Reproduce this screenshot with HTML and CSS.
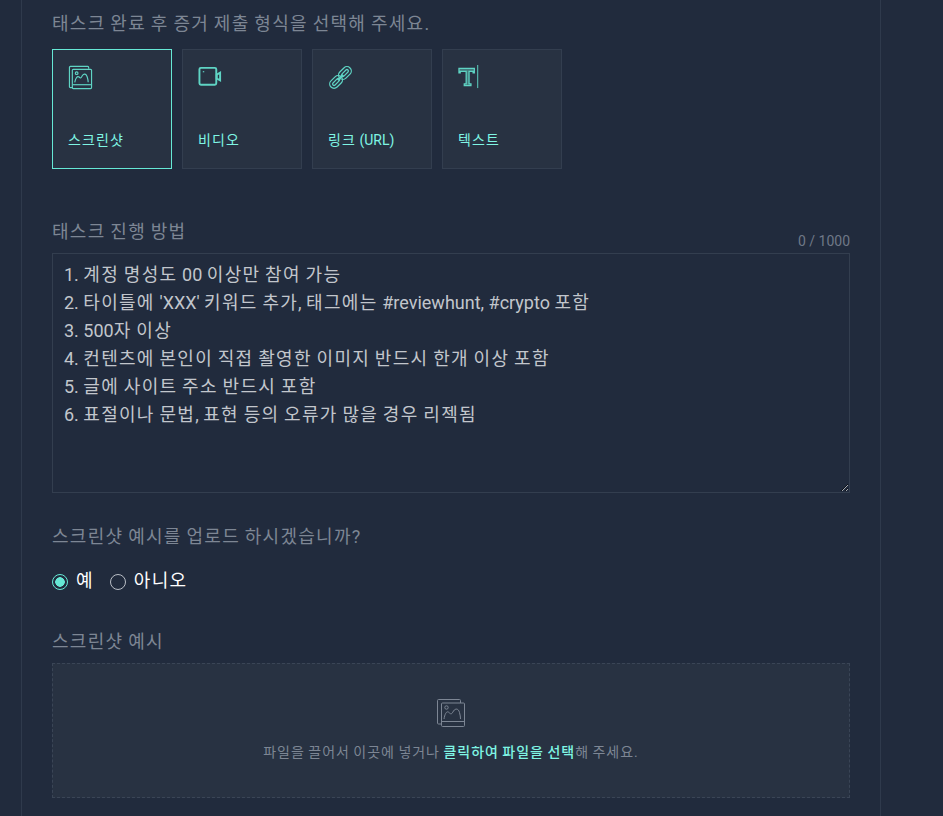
FILE: index.html
```html
<!DOCTYPE html>
<html lang="ko">
<head>
<meta charset="utf-8">
<title>태스크 증거 제출</title>
<link rel="stylesheet" href="styles.css">
</head>
<body>
<main class="panel">
  <p class="label first">태스크 완료 후 증거 제출 형식을 선택해 주세요.</p>
  <div class="types">
    <button class="type selected">
      <svg class="ticon" viewBox="0 0 26 26" fill="none" stroke="currentColor" stroke-width="1.2"><path d="M5 23.500H2.500a1 1 0 0 1-1-1V2.500a1 1 0 0 1 1-1h18a1 1 0 0 1 1 1V4"/><rect x="4.500" y="4.500" width="20" height="20" rx="1"/><path d="M5 20.500h19"/><circle cx="9" cy="8.500" r="1.400"/><path d="M7 18c1-5 3-7 4.500-5.500 1.500 1.500 2 1.500 3.500-1.500 1.500-2.500 4-2 5 1.500.6 2 1 4 1 5.500"/></svg>
      <span>스크린샷</span>
    </button>
    <button class="type">
      <svg class="ticon" viewBox="0 0 26 26" fill="none" stroke="currentColor" stroke-width="2"><rect x="1.500" y="3" width="17.500" height="17.500" rx="1.500"/><path d="M19.500 10l3.500-2v8l-3.500-2z"/><path d="M5 7h1.500" stroke-width="1.200"/></svg>
      <span>비디오</span>
    </button>
    <button class="type">
      <svg class="ticon" viewBox="0 0 26 26" fill="none" stroke="currentColor" stroke-width="1.300"><g transform="rotate(-45 13 13)"><rect x="-1" y="8.500" width="15" height="9" rx="4.500"/><rect x="12" y="8.500" width="15" height="9" rx="4.500"/><rect x="2" y="11.500" width="9" height="3" rx="1.500"/><rect x="15" y="11.500" width="9" height="3" rx="1.500"/><path d="M9 13h8" stroke-width="2.600"/></g></svg>
      <span>링크 <span class="latin">(URL)</span></span>
    </button>
    <button class="type">
      <svg class="ticon" viewBox="0 0 26 26" fill="none" stroke="currentColor"><path d="M1 3.500h16v4.700h-1.300V6.500h-4.200v13h2v2h-7v-2h2v-13H2.300v1.700H1z" stroke-width="1.300" fill="currentColor" fill-opacity=".45"/><path d="M20.500 0v24" stroke-width="1"/></svg>
      <span>텍스트</span>
    </button>
  </div>

  <div class="method-head">
    <label class="label">태스크 진행 방법</label>
    <span class="count latin">0 / 1000</span>
  </div>
  <div class="method" role="textbox" aria-multiline="true">
    <div><span class="latin">1. </span>계정 명성도 <span class="latin">00 </span>이상만 참여 가능</div>
    <div><span class="latin">2. </span>타이틀에 <span class="latin">'XXX' </span>키워드 추가<span class="latin">, </span>태그에는 <span class="latin">#reviewhunt, #crypto </span>포함</div>
    <div><span class="latin">3. 500</span>자 이상</div>
    <div><span class="latin">4. </span>컨텐츠에 본인이 직접 촬영한 이미지 반드시 한개 이상 포함</div>
    <div><span class="latin">5. </span>글에 사이트 주소 반드시 포함</div>
    <div><span class="latin">6. </span>표절이나 문법<span class="latin">, </span>표현 등의 오류가 많을 경우 리젝됨</div>
  </div>

  <p class="label question">스크린샷 예시를 업로드 하시겠습니까?</p>
  <div class="radios">
    <div class="radio"><span class="dot on"></span><span>예</span></div>
    <div class="radio"><span class="dot"></span><span>아니오</span></div>
  </div>

  <p class="label example">스크린샷 예시</p>
  <div class="drop">
    <svg class="dicon" viewBox="0 0 28 28" fill="none" stroke="currentColor" stroke-width="1"><path d="M4.500 25H1.500a1 1 0 0 1-1-1V1.500a1 1 0 0 1 1-1h21a1 1 0 0 1 1 1V4"/><rect x="4.500" y="4" width="23" height="23.500" rx="1"/><path d="M4.500 22.500h23"/><circle cx="9.500" cy="8.500" r="1.700"/><path d="M7 20c1-6 3-8.500 5-6.500 2 2 2.500 2 4.500-1.500 2-3 5-2.500 6 1.500.7 2.500 1 4.500 1 6.500"/></svg>
    <p class="drop-text">파일을 끌어서 이곳에 넣거나 <strong>클릭하여 파일을 선택</strong>해 주세요.</p>
  </div>
</main>
</body>
</html>
```
FILE: styles.css
```css
* { box-sizing: border-box; }
html, body { margin: 0; height: 816px; overflow: hidden; }
body {
  background: #212b3d;
  font-family: Roboto, "Noto Sans CJK KR", sans-serif;
  letter-spacing: .08em;
  word-spacing: -.06em;
  padding: 0 62px 0 21px;
}
.latin { letter-spacing: 0; word-spacing: 0; }
.panel {
  width: 860px;
  height: 816px;
  border-left: 1px solid #2f3a4c;
  border-right: 1px solid #2f3a4c;
  padding: 13px 30px 0;
}
.label {
  display: block;
  margin: 0;
  color: #7d8694;
  font-size: 18px;
  line-height: 22px;
  font-weight: 400;
}
.types { display: flex; gap: 10px; margin-top: 14px; }
.type {
  width: 120px;
  height: 120px;
  padding: 15px;
  display: flex;
  flex-direction: column;
  justify-content: space-between;
  align-items: flex-start;
  background: #283242;
  border: 1px solid #333e4f;
  color: #66e8d5;
  font: 400 14px/20px Roboto, "Noto Sans CJK KR", sans-serif;
  letter-spacing: .08em;
  word-spacing: -.08em;
}
.type span { color: #7ff5e4; margin-bottom: 3px; }
.type span span { margin: 0; }
.type.selected { border-color: #66e8d5; }
.ticon { width: 25px; height: 25px; display: block; color: #5fd4c4; }
.method-head {
  margin-top: 52px;
  height: 32px;
  display: flex;
  justify-content: space-between;
  align-items: flex-start;
}
.count { color: #6f7887; font-size: 14px; line-height: 15px; margin-top: 13px; }
.method {
  width: 798px;
  height: 240px;
  border: 1px solid #333e4f;
  padding: 7px 11px;
  color: #c2c6cc;
  font-size: 18px;
  line-height: 28px;
  overflow: auto;
  resize: vertical;
}
.question { margin-top: 33px; }
.radios { display: flex; gap: 16px; margin-top: 21px; }
.radio { display: flex; align-items: center; gap: 8px; color: #fff; font-size: 18px; line-height: 24px; }
.dot {
  width: 16px;
  height: 16px;
  border-radius: 50%;
  border: 1px solid #b9bec6;
  margin-top: 2px;
}
.dot.on {
  border-color: #66e8d5;
  background: radial-gradient(circle, #66e8d5 0 4.500px, transparent 5px);
}
.example { margin-top: 38px; }
.drop {
  margin-top: 10px;
  width: 798px;
  height: 135px;
  background: #283242;
  border: 1px dashed #3a4556;
  display: flex;
  flex-direction: column;
  align-items: center;
  padding-top: 35px;
}
.dicon { width: 28px; height: 28px; color: #7d8694; display: block; }
.drop-text { margin: 15px 0 0; color: #7d8694; font-size: 14px; line-height: 20px; letter-spacing: .07em; word-spacing: -.07em; }
.drop-text strong { color: #7ff5e4; font-weight: 500; }
```
